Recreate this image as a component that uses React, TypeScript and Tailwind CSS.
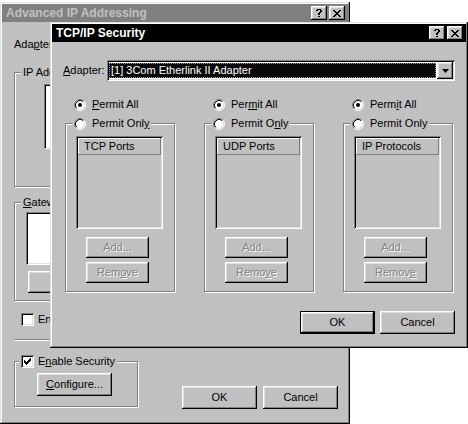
import React from "react";

const raised =
  "shadow-[inset_-1px_-1px_0_#000,inset_1px_1px_0_#fff,inset_-2px_-2px_0_#808080,inset_2px_2px_0_#dfdfdf]";
const frame =
  "shadow-[inset_-1px_-1px_0_#000,inset_1px_1px_0_#dfdfdf,inset_-2px_-2px_0_#808080,inset_2px_2px_0_#fff]";
const sunken =
  "shadow-[inset_1px_1px_0_#808080,inset_-1px_-1px_0_#fff,inset_2px_2px_0_#000,inset_-2px_-2px_0_#dfdfdf]";
const etched = "border border-[#808080] shadow-[1px_1px_0_#fff,inset_1px_1px_0_#fff]";
const dim = "text-[#808080] [text-shadow:1px_1px_0_#fff]";

// tiny pixel glyphs
const Pix = ({ rows, c = "#000" }: { rows: string[]; c?: string }) => (
  <svg width={rows[0].length} height={rows.length} shapeRendering="crispEdges" className="block">
    {rows.flatMap((r, y) =>
      r.split("").map((ch, x) =>
        ch === "#" ? <rect key={x + "-" + y} x={x} y={y} width="1" height="1" fill={c} /> : null
      )
    )}
  </svg>
);

const closeX = ["##....##", ".##..##.", "..####..", "...##...", "..####..", ".##..##.", "##....##"];
const help = [".####.", "##..##", "....##", "...##.", "..##..", "..##..", "......", "..##.."];
const tick = ["......#", ".....##", "#...###", "##.###.", "#####..", ".###...", "..#...."];

const Radio = ({ on }: { on?: boolean }) => (
  <svg width="12" height="12" viewBox="0 0 12 12" className="shrink-0 block">
    <circle cx="6" cy="6" r="5" fill="#fff" />
    <path d="M2.11 9.89A5.5 5.5 0 0 1 9.89 2.11" fill="none" stroke="#808080" />
    <path d="M9.89 2.11A5.5 5.5 0 0 1 2.11 9.89" fill="none" stroke="#fff" />
    <path d="M2.82 9.18A4.5 4.5 0 0 1 9.18 2.82" fill="none" stroke="#000" />
    <path d="M9.18 2.82A4.5 4.5 0 0 1 2.82 9.18" fill="none" stroke="#dfdfdf" />
    {on && <circle cx="6" cy="6" r="2" fill="#000" />}
  </svg>
);

const Check = ({ on }: { on?: boolean }) => (
  <span className={`w-[13px] h-[13px] shrink-0 bg-white flex items-center justify-center ${sunken}`}>
    {on && <Pix rows={tick} />}
  </span>
);

const TitleBar = ({ title, active }: { title: string; active?: boolean }) => (
  <div
    className={`h-[18px] flex items-center pl-[4px] pr-[3px] font-bold text-[12px] ${
      active ? "bg-black text-white" : "bg-[#808080] text-[#c0c0c0]"
    }`}
  >
    <span>{title}</span>
    <div className="ml-auto flex gap-[2px]">
      <div className={`w-[16px] h-[14px] bg-[#c0c0c0] flex items-center justify-center ${raised}`}>
        <Pix rows={help} />
      </div>
      <div className={`w-[16px] h-[14px] bg-[#c0c0c0] flex items-center justify-center ${raised}`}>
        <Pix rows={closeX} />
      </div>
    </div>
  </div>
);

const Btn = (props: any) => {
  const { children, className = "", disabled, def } = props;
  if (def) {
    return (
      <div className={`border border-black ${className}`}>
        <div className={`w-full h-full bg-[#c0c0c0] flex items-center justify-center ${raised}`}>{children}</div>
      </div>
    );
  }
  return (
    <div className={`bg-[#c0c0c0] flex items-center justify-center ${raised} ${disabled ? dim : ""} ${className}`}>
      {children}
    </div>
  );
};

const cols = [
  { all: ["", "P", "ermit All"], only: ["Permit Onl", "y", ""], head: "TCP Ports", rem: ["Rem", "o", "ve"] },
  { all: ["Per", "m", "it All"], only: ["Permit O", "n", "ly"], head: "UDP Ports", rem: ["Remo", "v", "e"] },
  { all: ["Perm", "i", "t All"], only: ["Permit Only", "", ""], head: "IP Protocols", rem: ["Remov", "e", ""] },
];

const Mn = ({ p }: { p: string[] }) => (
  <span>
    {p[0]}
    {p[1] && <u>{p[1]}</u>}
    {p[2]}
  </span>
);

const App = () => {
  return (
    <div className="relative w-[468px] h-[424px] bg-white overflow-hidden text-[11px] leading-[13px] text-black [font-family:'Liberation_Sans',Arial,sans-serif]">
      {/* back window */}
      <div className={`absolute left-0 top-[2px] w-[350px] h-[422px] bg-[#c0c0c0] p-[2px] flex flex-col ${frame}`}>
        <TitleBar title="Advanced IP Addressing" />
        <div className="flex flex-col pl-[12px] pr-[10px]">
          <div className="h-[21px] mt-[12px] flex items-center">
            <span>
              Ada<u>p</u>ter:
            </span>
          </div>
          <div className={`relative mt-[17px] h-[115px] ${etched}`}>
            <span className="absolute -top-[7px] left-[6px] px-[2px] bg-[#c0c0c0]">IP Address</span>
            <div className={`ml-[29px] mt-[11px] w-[220px] h-[65px] bg-white ${sunken}`} />
          </div>
          <div className={`relative mt-[15px] h-[99px] ${etched}`}>
            <span className="absolute -top-[7px] left-[6px] px-[2px] bg-[#c0c0c0]">
              <u>G</u>ateway
            </span>
            <div className={`ml-[11px] mt-[9px] w-[160px] h-[53px] bg-white ${sunken}`} />
            <Btn className="ml-[13px] mt-[6px] w-[75px] h-[22px]">Add...</Btn>
          </div>
          <div className="mt-[12px] h-[13px] flex items-center gap-[4px] pl-[7px]">
            <Check />
            <span>Enable PPTP Filtering</span>
          </div>
          <div className="mt-[13px] h-[2px] border-t border-t-[#808080] border-b border-b-white" />
          <div className="mt-[20px] flex">
            <div className={`relative w-[124px] h-[46px] ${etched}`}>
              <div className="absolute -top-[7px] left-[4px] pl-[2px] pr-[3px] bg-[#c0c0c0] flex items-center gap-[4px] h-[13px]">
                <Check on />
                <span>
                  E<u>n</u>able Security
                </span>
              </div>
              <Btn className="ml-[22px] mt-[11px] w-[75px] h-[23px]">
                <span>
                  <u>C</u>onfigure...
                </span>
              </Btn>
            </div>
            <div className="ml-auto mt-[25px] flex gap-[6px]">
              <Btn className="w-[75px] h-[23px]">OK</Btn>
              <Btn className="w-[75px] h-[23px]">Cancel</Btn>
            </div>
          </div>
        </div>
      </div>

      {/* front window */}
      <div className={`absolute left-[50px] top-[22px] w-[418px] h-[326px] bg-[#c0c0c0] p-[2px] flex flex-col ${frame}`}>
        <TitleBar active title="TCP/IP Security" />
        <div className="flex items-center mt-[18px] px-[11px] h-[21px]">
          <span className="w-[44px]">
            <u>A</u>dapter:
          </span>
          <div className={`flex-1 h-[21px] bg-white p-[2px] flex gap-[1px] ${sunken}`}>
            <div className="flex-1 my-[1px] bg-[#0a0a0a] text-white border border-dotted border-[#a0a0a0] flex items-center pl-[1px]">
              [1] 3Com Etherlink II Adapter
            </div>
            <div className={`w-[16px] h-[17px] bg-[#c0c0c0] flex items-center justify-center ${raised}`}>
              <svg width="7" height="4" viewBox="0 0 7 4" className="block">
                <path d="M0 0h7L3.5 4z" fill="#000" />
              </svg>
            </div>
          </div>
        </div>
        <div className="grid grid-cols-[110px_110px_110px] gap-x-[29px] pl-[13px] mt-[17px]">
          {cols.map((c, i) => (
            <div key={i} className="flex flex-col">
              <div className="h-[13px] flex items-center gap-[6px] pl-[9px]">
                <Radio on />
                <Mn p={c.all} />
              </div>
              <div className={`relative mt-[12px] pt-[12px] pb-[8px] flex flex-col ${etched}`}>
                <div className="absolute -top-[7px] left-[6px] px-[2px] h-[13px] bg-[#c0c0c0] flex items-center gap-[6px]">
                  <Radio />
                  <Mn p={c.only} />
                </div>
                <div className={`ml-[10px] w-[87px] h-[93px] p-[2px] bg-[#c0c0c0] ${sunken}`}>
                  <div className="h-[17px] flex items-center pl-[6px] shadow-[inset_-1px_-1px_0_#808080,inset_1px_1px_0_#fff]">
                    {c.head}
                  </div>
                </div>
                <Btn disabled className="ml-[20px] mt-[8px] w-[63px] h-[21px]">
                  Add...
                </Btn>
                <Btn disabled className="ml-[20px] mt-[4px] w-[63px] h-[21px]">
                  <span>
                    {c.rem[0]}
                    <u>{c.rem[1]}</u>
                    {c.rem[2]}
                  </span>
                </Btn>
              </div>
            </div>
          ))}
        </div>
        <div className="flex justify-end gap-[5px] pr-[11px] mt-[19px]">
          <Btn def className="w-[75px] h-[23px]">
            OK
          </Btn>
          <Btn className="w-[75px] h-[23px]">Cancel</Btn>
        </div>
      </div>
    </div>
  );
};

export default App;
